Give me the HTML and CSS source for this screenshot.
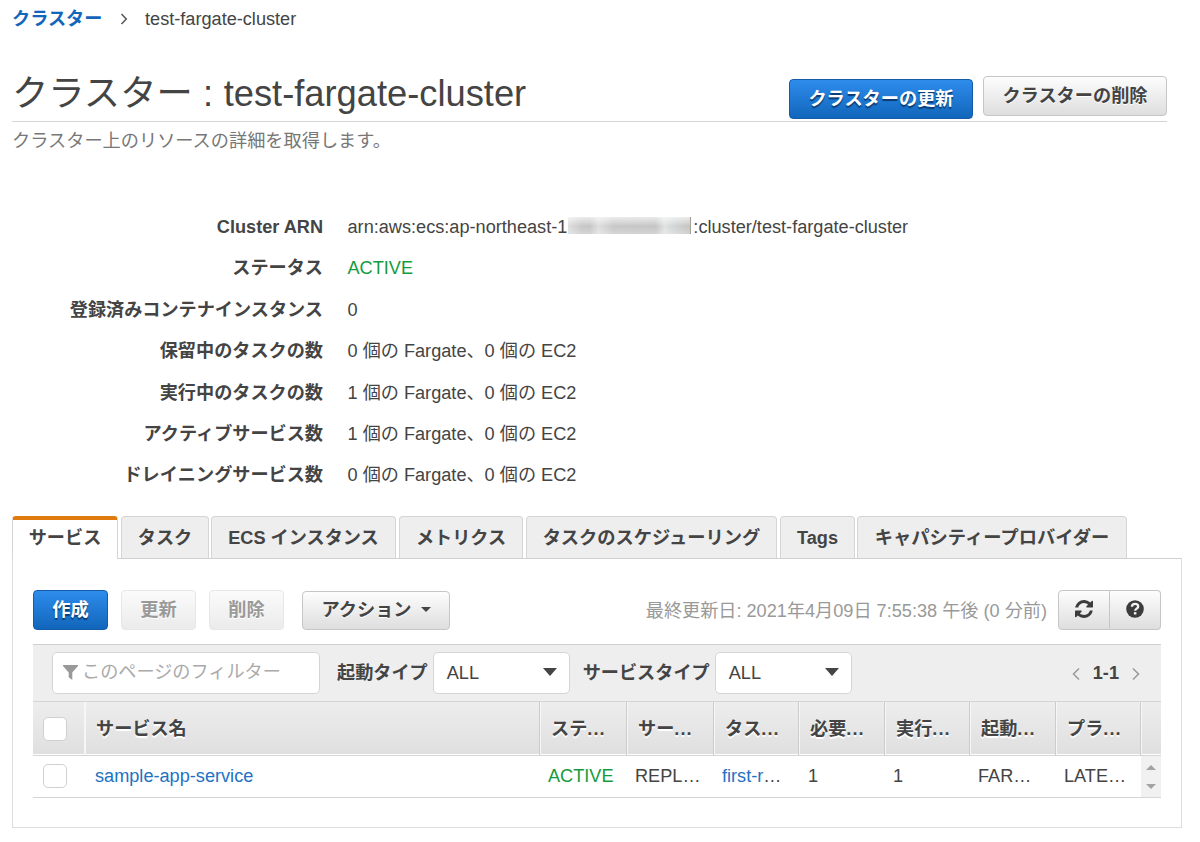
FILE: index.html
```html
<!DOCTYPE html>
<html lang="ja">
<head>
<meta charset="utf-8">
<title>test-fargate-cluster</title>
<link rel="stylesheet" href="styles.css">
</head>
<body>
<nav class="breadcrumb">
  <a class="crumb-link">クラスター</a>
  <svg class="crumb-arrow" width="8" height="12" viewBox="0 0 8 12"><path d="M1.500 1 6.300 6 1.500 11" fill="none" stroke="#555" stroke-width="1.500"/></svg>
  <span>test-fargate-cluster</span>
</nav>
<header class="heading">
  <h1 class="title">クラスター<span class="title-colon"> : </span>test-fargate-cluster</h1>
  <div class="heading-actions">
    <button class="btn btn-primary btn-update">クラスターの更新</button>
    <button class="btn btn-delete">クラスターの削除</button>
  </div>
</header>
<p class="description">クラスター上のリソースの詳細を取得します。</p>
<dl class="details">
  <dt>Cluster ARN</dt><dd>arn:aws:ecs:ap-northeast-1:<span class="account"><span class="redacted"></span></span>:cluster/test-fargate-cluster</dd>
  <dt>ステータス</dt><dd class="active">ACTIVE</dd>
  <dt>登録済みコンテナインスタンス</dt><dd>0</dd>
  <dt>保留中のタスクの数</dt><dd>0 個の Fargate、0 個の EC2</dd>
  <dt>実行中のタスクの数</dt><dd>1 個の Fargate、0 個の EC2</dd>
  <dt>アクティブサービス数</dt><dd>1 個の Fargate、0 個の EC2</dd>
  <dt>ドレイニングサービス数</dt><dd>0 個の Fargate、0 個の EC2</dd>
</dl>
<div class="tabs">
  <div class="tab tab-selected">サービス</div>
  <div class="tab tab-task">タスク</div>
  <div class="tab tab-ecs">ECS インスタンス</div>
  <div class="tab tab-metrics">メトリクス</div>
  <div class="tab tab-schedule">タスクのスケジューリング</div>
  <div class="tab tab-tags">Tags</div>
  <div class="tab tab-capacity">キャパシティープロバイダー</div>
</div>
<main class="panel">
  <div class="toolbar">
    <button class="btn btn-primary btn-small">作成</button>
    <button class="btn btn-small btn-disabled">更新</button>
    <button class="btn btn-small btn-disabled">削除</button>
    <button class="btn btn-menu">アクション<span class="menu-caret"></span></button>
    <span class="updated">最終更新日: 2021年4月09日 7:55:38 午後 (0 分前)</span>
    <div class="icon-group">
      <button class="btn icon-btn"><svg width="18" height="18" viewBox="0 0 1536 1536"><path fill="#3c3c3c" d="M1511 928q0 5-1 7-64 268-268 434.500T764 1536q-146 0-282.500-55T238 1324l-129 129q-19 19-45 19t-45-19-19-45V960q0-26 19-45t45-19h448q26 0 45 19t19 45-19 45l-137 137q71 66 161 102t187 36q134 0 250-65t186-179q11-17 53-117 8-23 30-23h192q13 0 22.500 9.500t9.500 22.500zm25-800v448q0 26-19 45t-45 19h-448q-26 0-45-19t-19-45 19-45l138-138Q969 256 768 256q-134 0-250 65T332 500q-11 17-53 117-8 23-30 23H50q-13 0-22.500-9.500T18 608v-7q65-268 270-434.500T768 0q146 0 284 55.500T1297 212l130-129q19-19 45-19t45 19 19 45z"/></svg></button>
      <button class="btn icon-btn"><svg width="18" height="18" viewBox="0 0 18 18"><circle cx="9" cy="9" r="8.800" fill="#3c3c3c"/><path d="M5.900 6.800C6 4.900 7.200 3.900 9 3.900c1.900 0 3.200 1.100 3.200 2.600 0 2.200-3 2.100-3 4.200" fill="none" stroke="#f2f2f2" stroke-width="2.300"/><rect x="7.900" y="12.100" width="2.500" height="2.400" fill="#f2f2f2"/></svg></button>
    </div>
  </div>
  <div class="filters">
    <div class="filter-input"><svg width="15" height="15" viewBox="0 0 15 15"><path d="M0 0h15v1L9.300 7.500V15L5.700 12.200V7.500L0 1z" fill="#999"/></svg><span>このページのフィルター</span></div>
    <label class="filter-label label-launch">起動タイプ</label>
    <div class="select">ALL<span class="select-caret"></span></div>
    <label class="filter-label label-service">サービスタイプ</label>
    <div class="select">ALL<span class="select-caret"></span></div>
    <div class="pager">
      <svg width="8" height="14" viewBox="0 0 8 14"><path d="M7 1.500 1.500 7 7 12.500" fill="none" stroke="#999" stroke-width="1.500"/></svg>
      <b>1-1</b>
      <svg width="8" height="14" viewBox="0 0 8 14"><path d="M1 1.500 6.500 7 1 12.500" fill="none" stroke="#999" stroke-width="1.500"/></svg>
    </div>
  </div>
  <div class="grid-row grid-head">
    <div class="check-cell"><span class="checkbox"></span></div>
    <div>サービス名</div><div>ステ<span class="dots">...</span></div><div>サー<span class="dots">...</span></div><div>タス<span class="dots">...</span></div><div>必要<span class="dots">...</span></div><div>実行<span class="dots">...</span></div><div>起動<span class="dots">...</span></div><div>プラ<span class="dots">...</span></div><div></div>
  </div>
  <div class="grid-row grid-body">
    <div class="check-cell"><span class="checkbox"></span></div>
    <div class="link">sample-app-service</div><div class="active">ACTIVE</div><div>REPL…</div><div><span class="link">first-r</span>…</div><div>1</div><div>1</div><div>FAR…</div><div>LATE…</div>
    <div class="scroller"><span class="scroll-up"></span><span class="scroll-down"></span></div>
  </div>
</main>
</body>
</html>
```
FILE: styles.css
```css
* { box-sizing: border-box; }
body {
  margin: 0;
  padding: 0 18px 0 12px;
  height: 842px;
  overflow: hidden;
  background: #fff;
  color: #444;
  font: 18.15px/24px "Liberation Sans", "Noto Sans CJK JP", sans-serif;
}
.breadcrumb { display: flex; align-items: center; height: 38px; }
.crumb-link { width: 91px; font-weight: bold; color: #1166bb; }
.crumb-arrow { margin: 0 17px 0 17px; }
.heading {
  display: flex;
  justify-content: space-between;
  width: 1155px;
  height: 84px;
  border-bottom: 1px solid #d5d5d5;
}
.title { margin: 34px 0 0; font-size: 36.300px; line-height: 44px; font-weight: normal; white-space: pre; }
.title-colon { letter-spacing: .2px; }
.heading-actions { display: flex; gap: 10px; padding-top: 38px; }
.btn {
  display: flex;
  align-items: center;
  justify-content: center;
  width: 184px;
  height: 40px;
  padding: 0;
  border: 1px solid #c6c6c6;
  border-radius: 4px;
  background: linear-gradient(#fdfdfd, #dedede);
  color: #444;
  font: bold 18.2px/24px "Liberation Sans", "Noto Sans CJK JP", sans-serif;
  text-shadow: 0 1px 0 #fff;
  white-space: nowrap;
}
.btn-primary {
  border-color: #145ca8;
  background: linear-gradient(#2e8cec, #1166bb);
  color: #fff;
  text-shadow: 0 2px 1px #0a3a70;
}
.btn-update { margin-top: 3px; }
.description { margin: 7px 0 0; color: #777; font-size: 18.2px; }
.details {
  display: grid;
  grid-template-columns: 311px 1fr;
  grid-auto-rows: 41.400px;
  column-gap: 24.500px;
  align-items: center;
  margin: 53.400px 0 0;
}
.details dt { text-align: right; font-weight: bold; }
.details dd { margin: 0; white-space: nowrap; }
.active { color: #149b3e; }
.account { position: relative; display: inline-block; width: 121px; height: 17px; vertical-align: -3px; }
.redacted {
  position: absolute;
  left: -4px;
  top: -2px;
  width: 123px;
  height: 17px;
  background:
    linear-gradient(rgba(255,255,255,.65), rgba(255,255,255,0) 55%, rgba(255,255,255,.25)),
    linear-gradient(90deg, #dedede, #c8c8c8 11%, #c6c6c6 18%, #dedede 25%, #c8c8c8 37%, #c5c5c5 72%, #dfe2e1 79%, #cfd3d3 88%, #c6c4c0);
  border-right: 1px solid #a39f9a;
}
.tabs { display: flex; gap: 3px; height: 42px; margin-top: 19.800px; }
.tab {
  height: 42px;
  padding-top: 9px;
  border: 1px solid #d5d5d5;
  border-bottom: 0;
  border-radius: 4px 4px 0 0;
  background: #eee;
  font-weight: bold;
  text-align: center;
  white-space: nowrap;
}
.tab-selected {
  width: 106px;
  height: 43px;
  padding-top: 6px;
  border-top: 4px solid #e07b0d;
  background: #fff;
  position: relative;
}
.tab-task { width: 88px; }
.tab-ecs { width: 185px; margin-left: -1px; }
.tab-metrics { width: 124px; }
.tab-schedule { width: 251px; }
.tab-tags { width: 75px; }
.tab-capacity { width: 270px; margin-left: -1px; }
.tab-schedule, .tab-capacity { font-size: 18.250px; }
.panel { height: 270px; padding: 31px 20px 0; border: 1px solid #ddd; border-top-color: #d0d0d0; }
.toolbar { display: flex; height: 54px; }
.btn-small { width: 75px; margin-right: 13px; }
.btn-disabled { border-color: #e7e7e7; background: linear-gradient(#fbfbfb, #ebebeb); color: #999; }
.btn-menu { width: 148px; height: 39px; margin: 1px 0 0 5px; }
.menu-caret { margin: 0 0 1px 9px; border: 5px solid transparent; border-top-color: #444; border-bottom: 0; }
.updated { margin: 9px 11px 0 auto; color: #999; white-space: nowrap; }
.icon-group { display: flex; }
.icon-btn { width: 52px; padding-bottom: 2px; border-radius: 4px 0 0 4px; }
.icon-btn + .icon-btn { border-left: 0; border-radius: 0 4px 4px 0; width: 51px; }
.filters {
  display: flex;
  align-items: center;
  height: 57px;
  padding-left: 19px;
  border-top: 1px solid #d0d0d0;
  background: #eee;
}
.filter-input {
  display: flex;
  align-items: center;
  gap: 4px;
  width: 268px;
  height: 42px;
  padding: 0 10px 1px;
  border: 1px solid #d5d5d5;
  border-radius: 5px;
  background: #fff;
  color: #aaa;
}
.filter-label { margin-right: 5px; font-weight: bold; white-space: nowrap; }
.label-launch { margin-left: 17px; }
.label-service { margin-left: 13px; }
.select {
  display: flex;
  align-items: center;
  justify-content: space-between;
  width: 137px;
  height: 42px;
  padding: 0 12px 0 13px;
  border: 1px solid #d5d5d5;
  border-radius: 5px;
  background: #fff;
}
.select-caret { margin-bottom: 2px; border: 7px solid transparent; border-top: 8px solid #444; border-bottom: 0; }
.pager { display: flex; align-items: center; gap: 13px; margin: 0 21px 0 auto; }
.pager svg { margin-top: 3px; }
.grid-row {
  display: grid;
  grid-template-columns: 52px 455px 87px 87px 85px 86px 85px 86px 85px 20px;
  white-space: nowrap;
}
.grid-head {
  height: 55px;
  border-top: 1px solid #d5d5d5;
  border-bottom: 1px solid #d5d5d5;
  background: linear-gradient(#ededed, #dfdfdf);
  box-shadow: inset 0 -1px #fff;
  font-weight: bold;
  text-shadow: 0 2px 1px #fff;
}
.grid-head > div { padding: 15px 0 0 11px; border-right: 1px solid #ccc; box-shadow: 1px 0 #f6f6f6; }
.grid-head > div:last-child { border-right: 0; box-shadow: none; }
.grid-head > .check-cell { padding: 15px 0 0 10px; border-right-color: #f6f6f6; }
.dots { letter-spacing: 1.100px; }
.grid-body { height: 42px; border-bottom: 1px solid #d5d5d5; }
.grid-body > div { padding: 8px 0 0 8px; }
.grid-body > div:nth-child(2) { padding-left: 10px; }
.grid-body > div:nth-child(6) { padding-left: 9px; }
.grid-body > .check-cell { padding: 8px 0 0 10px; }
.link { color: #2272c3; }
.checkbox { display: block; width: 24px; height: 24px; border: 1px solid #d0d0d0; border-radius: 5px; background: #fff; }
.grid-body > .scroller {
  display: flex;
  flex-direction: column;
  align-items: center;
  justify-content: space-between;
  padding: 9px 0 8px;
  background: #f1f1f1;
}
.scroll-up, .scroll-down { border: 5px solid transparent; }
.scroll-up { border-bottom-color: #a3a3a3; border-top: 0; }
.scroll-down { border-top-color: #a3a3a3; border-bottom: 0; }
```
